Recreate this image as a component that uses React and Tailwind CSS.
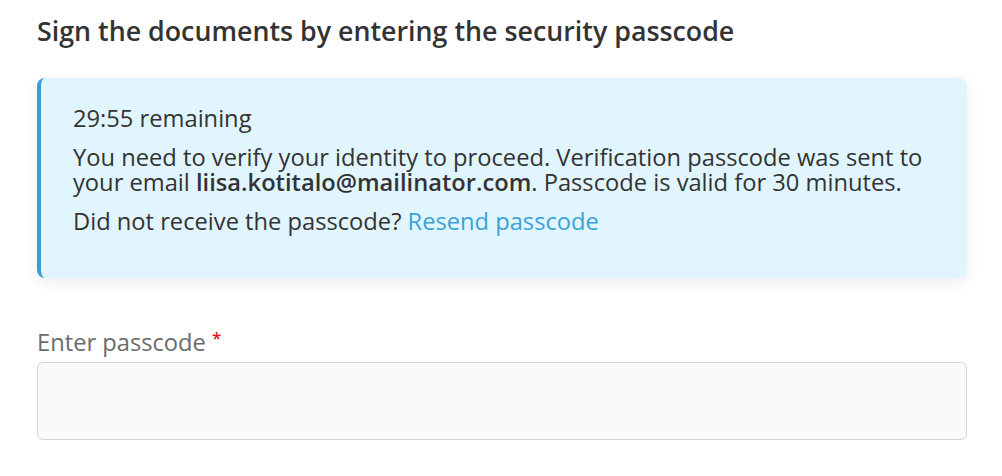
export default function App() {
  return (
    <div className="min-h-screen bg-white pl-[37px] pr-[35px] pt-[13px] text-[#333333]" style={{ fontFamily: '"Open Sans", Lato, sans-serif' }}>
      <h1 className="text-[26.8px] font-semibold leading-[36px] text-[#333333]">
        Sign the documents by entering the security passcode
      </h1>

      <div className="mt-[29px] flex h-[200px] rounded-lg border-l-4 border-[#3a9fd0] bg-[#e1f5fe] shadow-[0_4px_14px_rgba(0,0,0,0.08)]">
        <div className="flex flex-col gap-[14px] pl-[32px] pr-[30px] pt-[28px] text-[23.7px] leading-[25px]">
          <p>29:55 remaining</p>
          <p>
            You need to verify your identity to proceed. Verification passcode was sent to your email{' '}
            <span className="font-semibold">liisa.kotitalo@mailinator.com</span>. Passcode is valid for 30 minutes.
          </p>
          <p>
            Did not receive the passcode?{' '}
            <a href="#" className="text-[#3aa3d6]">Resend passcode</a>
          </p>
        </div>
      </div>

      <div className="mt-[50px]">
        <label className="flex items-start gap-[6px] text-[23.7px] leading-[28px] text-[#6b6b6b]">
          Enter passcode
          <span className="text-[17px] font-semibold leading-[20px] text-[#e0131b]">*</span>
        </label>
        <input className="mt-[6px] block h-[78px] w-full rounded-md border border-[#d4d4d4] bg-[#fafafa] px-4 text-[20px] outline-none" />
      </div>
    </div>
  )
}
